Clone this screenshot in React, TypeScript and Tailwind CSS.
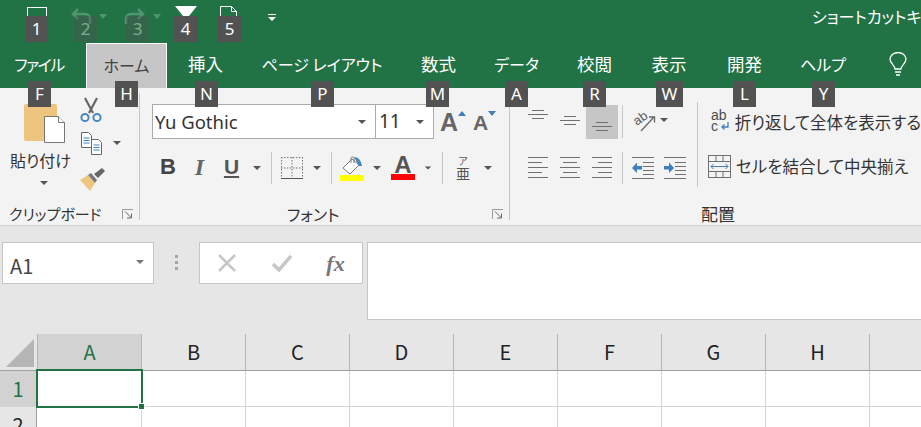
import type { ReactNode } from 'react';

const jp = "font-['Noto_Sans_CJK_JP','Noto_Sans',sans-serif] [font-feature-settings:'palt']";

const tabs = [
  { label: 'ファイル', cls: 'w-[78px] tracking-[-1.5px]' },
  { label: 'ホーム', cls: 'ml-[8px] w-[81px] bg-[#c6c6c6] text-[#444] border border-b-0 border-white' },
  { label: '挿入', cls: 'w-[77px] text-[17.5px]' },
  { label: 'ページ レイアウト', cls: 'w-[156px]' },
  { label: '数式', cls: 'w-[77px] text-[17.5px]' },
  { label: 'データ', cls: 'w-[79px]' },
  { label: '校閲', cls: 'w-[77px] text-[17.5px]' },
  { label: '表示', cls: 'w-[72px] text-[17.5px]' },
  { label: '開発', cls: 'w-[79px] text-[17.5px]' },
  { label: 'ヘルプ', cls: 'w-[78px]' },
];

const columns = ['B', 'C', 'D', 'E', 'F', 'G', 'H', ''];

const tips = [
  { key: '1', cls: 'left-[25px] top-[16px]' },
  { key: '2', cls: 'left-[74px] top-[16px] opacity-40' },
  { key: '3', cls: 'left-[126px] top-[16px] opacity-40' },
  { key: '4', cls: 'left-[174px] top-[16px]' },
  { key: '5', cls: 'left-[218px] top-[16px]' },
  { key: 'F', cls: 'left-[28px] top-[81px]' },
  { key: 'H', cls: 'left-[115px] top-[81px]' },
  { key: 'N', cls: 'left-[195px] top-[81px]' },
  { key: 'P', cls: 'left-[311px] top-[81px]' },
  { key: 'M', cls: 'left-[426px] top-[81px]' },
  { key: 'A', cls: 'left-[505px] top-[81px]' },
  { key: 'R', cls: 'left-[583px] top-[81px]' },
  { key: 'W', cls: 'left-[656px] top-[81px] w-[27px]' },
  { key: 'L', cls: 'left-[733px] top-[81px]' },
  { key: 'Y', cls: 'left-[812px] top-[81px]' },
];

function Caret({ className = 'fill-[#555]' }: { className?: string }) {
  return (
    <svg width="10" height="6" viewBox="0 0 10 6" className={className}>
      <path d="M1 1h8L5 5z" />
    </svg>
  );
}

function Cell({ className, children }: { className: string; children?: ReactNode }) {
  return <div className={`flex items-center justify-center shrink-0 ${className}`}>{children}</div>;
}

function Launcher() {
  return (
    <svg width="12" height="11" viewBox="0 0 12 11" fill="none" stroke="#666">
      <path d="M.5 10V.5H11" stroke="#999" />
      <path d="M3 2.500l6 6M9.500 4.500v4.500H5" />
    </svg>
  );
}

// lines: [x1, x2, y]
function Lines({ rows, h = 22 }: { rows: number[][]; h?: number }) {
  return (
    <svg width="22" height={h} viewBox={`0 0 22 ${h}`} stroke="#707070">
      {rows.map(([a, b, y]) => (
        <path key={`${a}-${y}`} d={`M${a} ${y + 0.5}H${b}`} />
      ))}
    </svg>
  );
}

function Paste() {
  return (
    <svg width="42" height="39" viewBox="0 0 42 39">
      <rect x="0" y="0" width="33" height="37" rx="2" fill="#edc57f" />
      <path d="M20.500 12.500h14l6 6v20h-20z" fill="#fff" stroke="#777" />
      <path d="M34.500 12.500v6h6" fill="#fff" stroke="#777" />
    </svg>
  );
}

function Scissors() {
  return (
    <svg width="22" height="26" viewBox="0 0 22 26" fill="none">
      <path d="M5 1l8 15M17 1L9 16" stroke="#666" strokeWidth="2.200" />
      <circle cx="5" cy="20.500" r="3.600" stroke="#4a86c0" strokeWidth="2" />
      <circle cx="17" cy="20.500" r="3.600" stroke="#4a86c0" strokeWidth="2" />
    </svg>
  );
}

function Copy() {
  return (
    <svg width="21" height="23" viewBox="0 0 21 23" fill="#fff" stroke="#666">
      <path d="M.5.500h7l3 3v12H.5z" />
      <path d="M10.500 7.500h7l3 3v12h-10z" />
      <path d="M2.500 6h6M2.500 8.500h6M2.500 11h6M12.500 13h6M12.500 15.500h6M12.500 18h6" stroke="#3f7fbd" />
    </svg>
  );
}

function Brush() {
  return (
    <svg width="25" height="23" viewBox="0 0 25 23">
      <path d="M0 12l8-5 7 8-5 8z" fill="#edc57f" />
      <path d="M8 7l3-2 6 7-2 3z" fill="#777" />
      <path d="M14 6l8-6 3 3-7 7z" fill="#666" />
    </svg>
  );
}

function Bucket() {
  return (
    <svg width="24" height="19" viewBox="0 0 24 19" fill="none">
      <path d="M12 3L3 12l7 6 9-9z" fill="#fff" stroke="#777" />
      <path d="M11 7V2.500a1.500 1.500 0 0 1 3 0V7" stroke="#777" />
      <path d="M14 1c4 0 7 3 8 9h-3z" fill="#4a86c0" />
    </svg>
  );
}

function Orientation() {
  return (
    <svg width="22" height="22" viewBox="0 0 22 22" fill="none" className="overflow-visible">
      <text
        x="1"
        y="14"
        transform="rotate(-35 7 11)"
        fill="#555"
        fontSize="13"
        fontFamily="Liberation Sans, sans-serif"
      >
        ab
      </text>
      <path d="M8 22L21 8M16 8h5.500v5.500" stroke="#666" strokeWidth="1.300" />
    </svg>
  );
}

function Wrap() {
  return (
    <div className="w-[22px] h-[24px] flex flex-col text-[#4d4d4d] text-[14px] leading-[11px] font-['Liberation_Sans',sans-serif]">
      <span>ab</span>
      <div className="flex items-center">
        <span>c</span>
        <svg width="10" height="9" viewBox="0 0 10 9" fill="none" stroke="#3f7fbd" strokeWidth="1.300" className="ml-[2px]">
          <path d="M8 0v5H2M4.500 2.500L2 5l2.500 2.500" />
        </svg>
      </div>
    </div>
  );
}

function Merge() {
  return (
    <svg width="23" height="23" viewBox="0 0 23 23" fill="none">
      <rect x=".5" y=".5" width="22" height="22" stroke="#707070" />
      <path d="M0 6.500h23M0 16.500h23M8 0v6M15 0v6M8 17v6M15 17v6" stroke="#707070" />
      <path d="M3 11.500h17M5.500 9L3 11.500 5.500 14M17.500 9l2.500 2.500-2.500 2.500" stroke="#3f7fbd" />
    </svg>
  );
}

function Indent({ flip }: { flip?: boolean }) {
  return (
    <svg width="22" height="22" viewBox="0 0 22 22" stroke="#707070">
      <path d="M0 .5h22M0 21.500h22M11 5.500h11M11 9.500h11M11 13.500h11M11 17.500h11" />
      <path d={flip ? 'M0 9h5V5.500l5 5.500-5 5v-3.500H0z' : 'M10 9H5V5.500L0 11l5 5v-3.500h5z'} fill="#3f7fbd" stroke="none" />
    </svg>
  );
}

function Sep({ className = 'h-[32px]' }: { className?: string }) {
  return <div className={`w-px bg-[#c6c6c6] shrink-0 ${className}`} />;
}

export default function App() {
  return (
    <div className={`relative w-[921px] h-[427px] overflow-hidden bg-white ${jp}`}>
      {/* Title bar */}
      <div className="h-[43px] bg-[#217346] flex items-start text-white">
        <Cell className="ml-[27px] mt-[7px] w-[20px] h-[20px] border border-white" />
        <Cell className="ml-[21px] mt-[6px] w-[28px] h-[20px] opacity-40">
          <svg width="22" height="16" viewBox="0 0 22 16" fill="none" stroke="#9fc6af" strokeWidth="2.500">
            <path d="M3 6h11a5 5 0 0 1 5 5v5M7 1L2 6l5 5" />
          </svg>
        </Cell>
        <Cell className="ml-[3px] mt-[13px] w-[8px] h-[6px] opacity-40">
          <svg width="8" height="5" viewBox="0 0 8 5" fill="#9fc6af"><path d="M0 0h8L4 5z" /></svg>
        </Cell>
        <Cell className="ml-[13px] mt-[6px] w-[28px] h-[20px] opacity-40">
          <svg width="22" height="16" viewBox="0 0 22 16" fill="none" stroke="#9fc6af" strokeWidth="2.500">
            <path d="M19 6H8a5 5 0 0 0-5 5v5M15 1l5 5-5 5" />
          </svg>
        </Cell>
        <Cell className="ml-[5px] mt-[13px] w-[8px] h-[6px] opacity-40">
          <svg width="8" height="5" viewBox="0 0 8 5" fill="#9fc6af"><path d="M0 0h8L4 5z" /></svg>
        </Cell>
        <Cell className="ml-[14px] mt-[6px] w-[22px] h-[12px]">
          <svg width="22" height="12" viewBox="0 0 22 12" fill="#fff">
            <path d="M0 0h22l-8 10v2H8v-2z" />
          </svg>
        </Cell>
        <Cell className="ml-[23px] mt-[6px] w-[17px] h-[14px]">
          <svg width="17" height="14" viewBox="0 0 17 14" fill="none" stroke="#fff">
            <path d="M.5 14V.5h11l5 5V14M11.500.5v5h5" />
          </svg>
        </Cell>
        <Cell className="ml-[30px] mt-[13px] w-[10px] h-[9px]">
          <svg width="8" height="7" viewBox="0 0 8 7" fill="#fff">
            <path d="M0 0h8v1H0zM0 3h8L4 7z" />
          </svg>
        </Cell>
        <div className="ml-[535px] mt-[4px] text-[16px] leading-[24px] whitespace-nowrap">ショートカットキー</div>
      </div>

      {/* Tabs */}
      <div className="h-[45px] bg-[#217346] flex items-start text-[16px] text-white">
        {tabs.map((t) => (
          <div key={t.label} className={`flex items-center justify-center h-[45px] pb-[3px] whitespace-nowrap ${t.cls}`}>
            {t.label}
          </div>
        ))}
        <Cell className="ml-[27px] h-[42px] w-[18px]">
          <svg width="18" height="24" viewBox="0 0 18 24" fill="none" stroke="#fff" strokeWidth="1.300">
            <path d="M6 17c0-4-5-5-5-10a8 6.500 0 0 1 16 0c0 5-5 6-5 10zM6 20h6M7 23h4" />
          </svg>
        </Cell>
      </div>

      {/* Ribbon */}
      <div className="h-[138px] flex bg-[#f3f3f3] border-b border-[#d2d2d2] text-[#333]">
        {/* Clipboard */}
        <div className="w-[140px] flex flex-col border-r border-[#c6c6c6] my-[5px]">
          <div className="h-[112px] shrink-0 flex">
            <div className="w-[76px] pl-[10px] pt-[11px] flex flex-col items-start">
              <div className="pl-[14px]"><Paste /></div>
              <div className="text-[16px] leading-[22px] mt-[6px] whitespace-nowrap">貼り付け</div>
              <div className="pl-[29px] mt-[9px]"><Caret /></div>
            </div>
            <div className="flex flex-col pl-[4px] pt-[4px]">
              <Cell className="w-[22px] h-[26px]"><Scissors /></Cell>
              <div className="flex items-center mt-[8px]">
                <Cell className="w-[22px] h-[24px]"><Copy /></Cell>
                <div className="ml-[10px]"><Caret /></div>
              </div>
              <Cell className="w-[25px] h-[23px] mt-[13px]"><Brush /></Cell>
            </div>
          </div>
          <div className="flex justify-between items-center pl-[9px] pr-[5px] h-[18px] shrink-0 text-[15px]">
            <span className="whitespace-nowrap">クリップボード</span>
            <Launcher />
          </div>
        </div>

        {/* Font */}
        <div className="w-[370px] flex flex-col border-r border-[#c6c6c6] my-[5px]">
          <div className="h-[112px] shrink-0 flex flex-col pl-[12px] pt-[11px]">
            <div className="flex items-center">
              <div className="w-[224px] h-[35px] bg-white border border-[#ababab] flex items-center justify-between pl-[2px] pr-[8px] text-[18.5px] font-['Noto_Sans',sans-serif]">
                <span>Yu Gothic</span>
                <Caret />
              </div>
              <div className="w-[59px] h-[35px] -ml-px bg-white border border-[#ababab] flex items-center justify-between pl-[3px] pr-[8px] text-[19px] font-['Noto_Sans',sans-serif]">
                <span>11</span>
                <Caret />
              </div>
              <div className="flex items-start ml-[6px] mt-[2px] text-[#666] font-['Liberation_Sans',sans-serif] font-bold">
                <span className="text-[25px] leading-[25px]">A</span>
                <svg width="8" height="5" viewBox="0 0 8 5" fill="#3f7fbd" className="mt-[1px]"><path d="M4 0l4 5H0z" /></svg>
                <span className="text-[21px] leading-[25px] ml-[7px]">A</span>
                <svg width="8" height="5" viewBox="0 0 8 5" fill="#3f7fbd" className="mt-[1px]"><path d="M0 0h8L4 5z" /></svg>
              </div>
            </div>
            <div className="flex items-center mt-[13px] h-[32px]">
              <Cell className="w-[32px] pb-[3px] text-[22px] font-bold text-[#444] font-['Liberation_Sans',sans-serif]">B</Cell>
              <Cell className="w-[31px] pb-[3px] text-[24px] font-bold italic text-[#666] font-['Liberation_Serif',serif]">I</Cell>
              <Cell className="w-[33px] pb-[3px] text-[21px] font-bold text-[#555] font-['Liberation_Sans',sans-serif] underline underline-offset-2">U</Cell>
              <Cell className="w-[18px]"><Caret /></Cell>
              <div className="w-[5px]" />
              <Sep />
              <Cell className="w-[39px]">
                <svg width="22" height="22" viewBox="0 0 22 22" fill="none" stroke="#777" strokeDasharray="1.500 1.500">
                  <path d="M.5 0v21M11 0v21M21.500 0v21M0 .5h22M0 11h22" />
                  <path d="M0 21.500h22" stroke="#555" strokeDasharray="none" />
                </svg>
              </Cell>
              <Cell className="w-[12px]"><Caret /></Cell>
              <div className="w-[8px]" />
              <Sep />
              <Cell className="w-[40px]">
                <div className="flex flex-col">
                  <Bucket />
                  <div className="w-[24px] h-[6px] bg-[#ffff00]" />
                </div>
              </Cell>
              <Cell className="w-[10px]"><Caret /></Cell>
              <Cell className="w-[42px]">
                <div className="flex flex-col items-center w-[24px]">
                  <span className="text-[24px] leading-[18px] font-bold text-[#555] font-['Liberation_Sans',sans-serif]">A</span>
                  <div className="w-[24px] h-[6px] bg-[#ff0000]" />
                </div>
              </Cell>
              <Cell className="w-[8px]"><Caret /></Cell>
              <div className="w-[10px]" />
              <Sep />
              <Cell className="w-[40px]">
                <div className="flex flex-col items-center text-[#555]">
                  <span className="text-[10px] leading-[10px]">ア</span>
                  <span className="text-[14px] leading-[14px]">亜</span>
                </div>
              </Cell>
              <Cell className="w-[10px]"><Caret /></Cell>
            </div>
          </div>
          <div className="flex justify-between items-center pl-[147px] pr-[5px] h-[18px] shrink-0 text-[16px]">
            <span>フォント</span>
            <Launcher />
          </div>
        </div>

        {/* Alignment */}
        <div className="flex-1 flex flex-col my-[5px] min-w-0">
          <div className="h-[112px] shrink-0 flex">
            <div className="w-[187px] pl-[12px] pt-[12px] flex flex-col">
              <div className="flex items-start h-[34px]">
                <Cell className="w-[32px] h-[34px]"><Lines h={34} rows={[[5, 17, 5], [1, 21, 9], [5, 17, 13]]} /></Cell>
                <Cell className="w-[32px] h-[34px]"><Lines h={34} rows={[[5, 17, 11], [1, 21, 15], [5, 17, 19]]} /></Cell>
                <Cell className="w-[32px] h-[34px] bg-[#c6c6c6]"><Lines h={34} rows={[[5, 17, 17], [1, 21, 21], [5, 17, 25]]} /></Cell>
                <div className="w-[4px]" />
                <Sep className="h-[33px]" />
                <div className="w-[10px]" />
                <Cell className="w-[22px] h-[30px]"><Orientation /></Cell>
                <Cell className="ml-[4px] w-[10px] h-[30px]"><Caret /></Cell>
              </div>
              <div className="flex items-center h-[32px] mt-[13px]">
                <Cell className="w-[32px]"><Lines rows={[[1, 21, 0], [1, 15, 5], [1, 21, 10], [1, 15, 15], [1, 21, 20]]} /></Cell>
                <Cell className="w-[32px]"><Lines rows={[[1, 21, 0], [4, 18, 5], [1, 21, 10], [4, 18, 15], [1, 21, 20]]} /></Cell>
                <Cell className="w-[32px]"><Lines rows={[[1, 21, 0], [7, 21, 5], [1, 21, 10], [7, 21, 15], [1, 21, 20]]} /></Cell>
                <div className="w-[4px]" />
                <Sep />
                <div className="w-[9px]" />
                <Indent />
                <div className="w-[10px]" />
                <Indent flip />
              </div>
            </div>
            <Sep className="h-[85px] mt-[9px]" />
            <div className="flex-1 pl-[10px] pt-[11px] flex flex-col text-[16.5px] text-[#333] whitespace-nowrap overflow-hidden">
              <div className="flex items-center h-[36px]">
                <div className="pl-[3px] w-[28px]"><Wrap /></div>
                <span>折り返して全体を表示する</span>
              </div>
              <div className="flex items-center h-[32px] mt-[10px]">
                <div className="w-[28px]"><Merge /></div>
                <span>セルを結合して中央揃え</span>
              </div>
            </div>
          </div>
          <div className="flex items-center pl-[191px] h-[18px] shrink-0 text-[17px]">配置</div>
        </div>
      </div>

      {/* Formula bar */}
      <div className="h-[108px] bg-[#e6e6e6] flex items-start pt-[16px] text-[#444]">
        <div className="ml-[2px] w-[152px] h-[42px] bg-white border border-[#c6c6c6] flex items-center justify-between pl-[7px] pr-[8px] pt-[5px] text-[20px]">
          <span>A1</span>
          <Caret className="fill-[#777] -mt-[7px]" />
        </div>
        <div className="w-[45px] h-[42px] flex flex-col items-center justify-start gap-[3px] pt-[13px]">
          <div className="w-[3px] h-[3px] bg-[#a6a6a6]" />
          <div className="w-[3px] h-[3px] bg-[#a6a6a6]" />
          <div className="w-[3px] h-[3px] bg-[#a6a6a6]" />
        </div>
        <div className="w-[164px] h-[42px] bg-white border border-[#c6c6c6] flex items-center">
          <Cell className="w-[54px] h-[40px]">
            <svg width="18" height="18" viewBox="0 0 18 18" stroke="#c6c6c6" strokeWidth="2.500"><path d="M1 1l16 16M17 1L1 17" /></svg>
          </Cell>
          <Cell className="w-[55px] h-[40px]">
            <svg width="20" height="17" viewBox="0 0 20 17" fill="none" stroke="#c6c6c6" strokeWidth="3.500"><path d="M1 9l6 6L19 1" /></svg>
          </Cell>
          <Cell className="w-[53px] h-[40px] font-['Liberation_Serif',serif] italic font-bold text-[22px] text-[#777]">fx</Cell>
        </div>
        <div className="ml-[4px] flex-1 h-[78px] bg-white border border-[#c6c6c6] border-r-0" />
      </div>

      {/* Sheet */}
      <div className="bg-[#e6e6e6] text-[#222] text-[20px]">
        <div className="flex h-[37px] border-b border-[#9f9f9f]">
          <div className="w-[37px] shrink-0 flex items-end pl-[6px] pb-[3px]">
            <svg width="28" height="28" viewBox="0 0 28 28" fill="#b5b5b5"><path d="M28 0v28H0z" /></svg>
          </div>
          <div className="w-[105px] shrink-0 bg-[#d2d2d2] text-[#217346] border-x border-[#b5b5b5] flex items-center justify-center">A</div>
          {columns.map((c) => (
            <div key={c} className="w-[104px] shrink-0 border-r border-[#b5b5b5] flex items-center justify-center">{c}</div>
          ))}
        </div>
        <div className="flex h-[36px] bg-white border-b border-[#d4d4d4]">
          <div className="w-[37px] shrink-0 bg-[#d2d2d2] text-[#217346] border-r border-[#9f9f9f] flex items-center justify-center">1</div>
          <div className="w-[105px] shrink-0 border-r border-[#d4d4d4]" />
          {columns.map((c) => (
            <div key={c} className="w-[104px] shrink-0 border-r border-[#d4d4d4]" />
          ))}
        </div>
        <div className="flex h-[36px] bg-white">
          <div className="w-[37px] shrink-0 bg-[#e6e6e6] border-r border-[#9f9f9f] flex items-center justify-center">2</div>
          <div className="w-[105px] shrink-0 border-r border-[#d4d4d4]" />
          {columns.map((c) => (
            <div key={c} className="w-[104px] shrink-0 border-r border-[#d4d4d4]" />
          ))}
        </div>
      </div>

      {/* Selected cell */}
      <div className="absolute left-[36px] top-[369px] w-[107px] h-[39px] border-2 border-[#217346]" />
      <div className="absolute left-[138px] top-[403px] w-[7px] h-[7px] bg-[#217346] border border-white" />

      {/* Key tips */}
      {tips.map((t) => (
        <div
          key={t.key}
          className={`absolute w-[23px] h-[26px] bg-[#525252] text-white text-[17px] flex items-center justify-center font-['Noto_Sans',sans-serif] ${t.cls}`}
        >
          {t.key}
        </div>
      ))}
    </div>
  );
}
